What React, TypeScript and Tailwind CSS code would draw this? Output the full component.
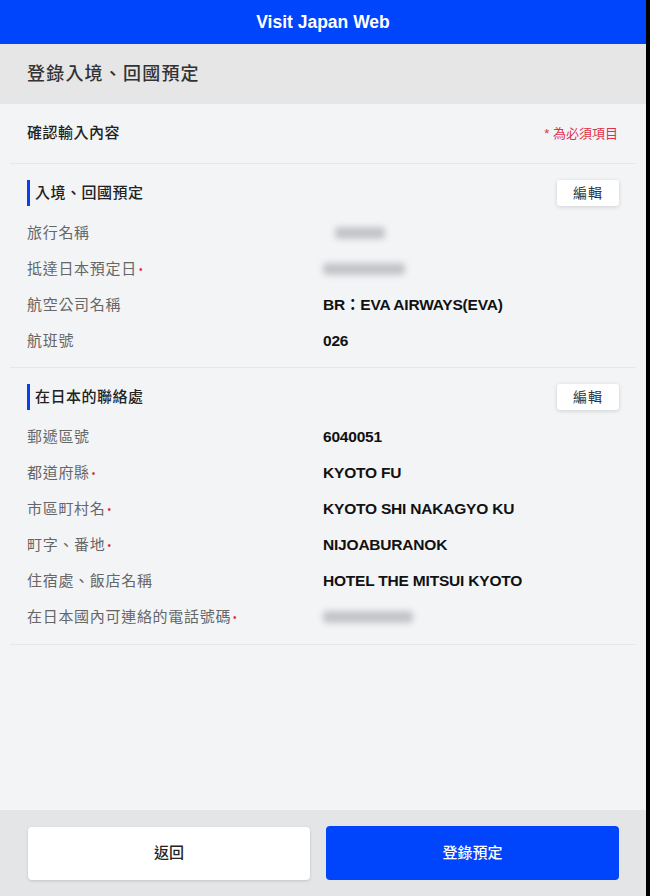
import React from "react";

const cjk = "font-['Liberation_Sans','Noto_Sans_CJK_TC',sans-serif]";

type Row = { label: string; required?: boolean; value?: string; blur?: number; offset?: number };

const trip: Row[] = [
    { label: "旅行名稱", blur: 50, offset: 12 },
    { label: "抵達日本預定日", required: true, blur: 82 },
    { label: "航空公司名稱", value: "BR：EVA AIRWAYS(EVA)" },
    { label: "航班號", value: "026" },
];

const contact: Row[] = [
    { label: "郵遞區號", value: "6040051" },
    { label: "都道府縣", required: true, value: "KYOTO FU" },
    { label: "市區町村名", required: true, value: "KYOTO SHI NAKAGYO KU" },
    { label: "町字、番地", required: true, value: "NIJOABURANOK" },
    { label: "住宿處、飯店名稱", value: "HOTEL THE MITSUI KYOTO" },
    { label: "在日本國內可連絡的電話號碼", required: true, blur: 90 },
];

function Section({ title, rows, pb }: { title: string; rows: Row[]; pb: string }) {
    return (
        <div className={`pt-[16px] ${pb}`}>
            <div className="flex items-center justify-between pl-[27px] pr-[27px] h-[26px]">
                <div className="flex items-center h-full border-l-[3px] border-[#0a3ff0] pl-[5px] text-[15px] tracking-[0.5px] text-[#222] font-medium">
                    {title}
                </div>
                <button className="w-[62px] h-[26px] bg-white rounded-[3px] shadow-[0_1px_4px_rgba(0,0,0,0.15)] text-[14px] tracking-[1px] text-[#333]">
                    編輯
                </button>
            </div>
            <div className="mt-[9px]">
                {rows.map((r) => (
                    <div key={r.label} className="flex items-center h-[36px]">
                        <div className="w-[323px] shrink-0 pl-[27px] text-[15px] tracking-[0.7px] text-[#666]">
                            {r.label}
                            {r.required && <span className="ml-[2px] text-[10px] text-[#e0304a] align-middle">•</span>}
                        </div>
                        {r.value && <div className="text-[15.5px] font-bold text-[#111] tracking-[-0.2px]">{r.value}</div>}
                        {r.blur && (
                            <div
                                className="h-[12px] rounded bg-[#c2c4c7] blur-[3px]"
                                style={{ width: r.blur, marginLeft: r.offset ?? 0 }}
                            />
                        )}
                    </div>
                ))}
            </div>
        </div>
    );
}

export default function App() {
    return (
        <div className={`flex w-[650px] h-[896px] bg-black ${cjk}`}>
            <div className="flex flex-col w-[646px] h-full bg-[#f3f4f6]">
                <div className="h-[44px] bg-[#0044fb] flex items-center justify-center text-white font-bold text-[17.5px]">
                    Visit Japan Web
                </div>
                <div className="h-[60px] bg-[#e6e6e7] flex items-center pl-[27px] text-[18px] tracking-[1.2px] font-medium text-[#333]">
                    登錄入境、回國預定
                </div>
                <div className="flex-1">
                    <div className="h-[59px] flex items-center justify-between pl-[27px] pr-[28px]">
                        <span className="text-[15px] tracking-[0.5px] text-[#222] font-medium">確認輸入內容</span>
                        <span className="text-[13px] text-[#e0304a]">* 為必須項目</span>
                    </div>
                    <div className="mx-[10px] border-t border-[#e6e7e9]" />
                    <Section title="入境、回國預定" rows={trip} pb="pb-[8px]" />
                    <div className="mx-[10px] border-t border-[#e6e7e9]" />
                    <Section title="在日本的聯絡處" rows={contact} pb="pb-[9px]" />
                    <div className="mx-[10px] border-t border-[#e6e7e9]" />
                </div>
                <div className="h-[86px] bg-[#e4e5e7] flex items-start pt-[17px] pl-[28px] pr-[27px] gap-[16px]">
                    <button className="w-[282px] h-[53px] bg-white rounded-[4px] shadow-[0_1px_3px_rgba(0,0,0,0.15)] text-[15px] font-medium text-[#222]">
                        返回
                    </button>
                    <button className="flex-1 h-[54px] -mt-[1px] bg-[#0044fb] rounded-[4px] text-[15px] font-medium text-white">
                        登錄預定
                    </button>
                </div>
            </div>
        </div>
    );
}
